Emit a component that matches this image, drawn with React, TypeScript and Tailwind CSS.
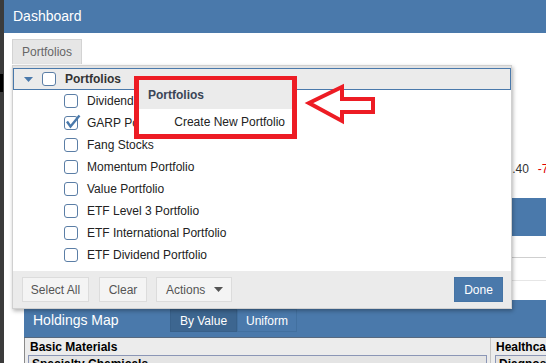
import React from "react";

function Box({ checked = false }: { checked?: boolean }) {
  return (
    <span className="relative inline-block w-[14px] h-[14px] rounded-[3px] border border-[#5b7ea6] bg-white shrink-0">
      {checked && (
        <svg className="absolute left-[-1px] top-[-1px] overflow-visible" width="14" height="14" viewBox="0 0 14 14">
          <path d="M3 5.5 L6.5 10.5 L15.5 -0.5" fill="none" stroke="#4a79ab" strokeWidth="2.4" />
        </svg>
      )}
    </span>
  );
}

const items: [string, boolean][] = [
  ["Dividend Portfolio", false],
  ["GARP Portfolio", true],
  ["Fang Stocks", false],
  ["Momentum Portfolio", false],
  ["Value Portfolio", false],
  ["ETF Level 3 Portfolio", false],
  ["ETF International Portfolio", false],
  ["ETF Dividend Portfolio", false],
];

export default function App() {
  return (
    <div className="relative w-[546px] h-[363px] overflow-hidden flex bg-[#3b3b3b] font-['Liberation_Sans',Arial,sans-serif]">
      {/* left edge strip */}
      <div className="w-[4px] shrink-0 flex flex-col">
        <div className="h-[74px]" />
        <div className="h-[18px] w-[3px] bg-black" />
      </div>

      {/* main window */}
      <div className="relative flex-1 bg-white flex flex-col">
        <div className="h-[33px] shrink-0 bg-[#4a79ab] flex items-center pl-[9px] text-white text-[14px]">
          Dashboard
        </div>
        <div className="pl-[8px] pt-[6px]">
          <div className="h-[25px] w-[70px] bg-[#e6e6e6] border border-b-0 border-[#d3d3d3] text-[12px] text-[#666] flex items-center justify-center">
            Portfolios
          </div>
        </div>

        {/* background content */}
        <div className="h-[97px] shrink-0" />
        <div className="h-[16px] shrink-0 flex items-center gap-[9px] pl-[489px] text-[12px] whitespace-nowrap">
          <span className="text-[#333]">112.40</span>
          <span className="text-[#e00000]">-7.52%</span>
        </div>
        <div className="h-[21px] shrink-0" />
        <div className="h-[38px] shrink-0 ml-[20px] bg-[#4a79ab]" />
        <div className="h-[21px] shrink-0" />
        <div className="h-[1px] shrink-0 ml-[20px] bg-[#cfcfcf]" />
        <div className="h-[22px] shrink-0" />
        <div className="h-[1px] shrink-0 ml-[20px] bg-[#e6e6e6]" />
        <div className="h-[19px] shrink-0" />

        {/* Holdings map */}
        <div className="ml-[20px] flex flex-col shrink-0">
          <div className="h-[37px] bg-[#4a79ab] flex items-center pt-[4px]">
            <span className="pl-[9px] w-[146px] text-white text-[14px]">Holdings Map</span>
            <div className="h-[23px] w-[67px] bg-[#3d6690] border border-[#386089] text-white text-[12px] flex items-center justify-center">
              By Value
            </div>
            <div className="h-[23px] w-[60px] bg-[#4a79ab] border border-[#42709f] text-white text-[12px] flex items-center justify-center">
              Uniform
            </div>
          </div>
          <div className="h-[1px] bg-[#56697f]" />
          <div className="flex bg-[#ececec] border-l border-[#8a8a8a] h-[30px] text-[12px] font-bold text-black">
            <div className="w-[466px] shrink-0 border-r border-[#c4c4c4] pl-[3px] pr-[3px] pt-[1px] flex flex-col">
              <div className="h-[16px] leading-[16px] pl-[2px]">Basic Materials</div>
              <div className="h-[20px] border border-[#8b96b6] bg-[#e4e4e4] pl-[3px] leading-[16px]">Specialty Chemicals</div>
            </div>
            <div className="flex-1 pl-[4px] pt-[1px] flex flex-col whitespace-nowrap">
              <div className="h-[16px] leading-[16px] pl-[1px]">Healthcare</div>
              <div className="h-[20px] border border-[#8b96b6] bg-[#e4e4e4] pl-[3px] leading-[16px]">Diagnostics</div>
            </div>
          </div>
        </div>

        {/* dropdown panel */}
        <div className="absolute left-[8px] top-[65px] w-[500px] h-[244px] bg-white border border-[#d0d0d0] shadow-[1px_2px_4px_rgba(0,0,0,0.3)] flex flex-col text-[12px]">
          <div className="h-[2px] bg-[#e2e2e2]" />
          <div className="h-[22px] border border-[#4a79ab] bg-[#ebebeb] flex items-center pl-[10px]">
            <svg width="9" height="5" viewBox="0 0 9 5" className="shrink-0">
              <polygon points="0,0 9,0 4.5,5" fill="#4a79ab" />
            </svg>
            <span className="ml-[9px] flex"><Box /></span>
            <span className="ml-[9px] font-bold text-[#333]">Portfolios</span>
          </div>
          <div className="flex flex-col">
            {items.map(([label, checked]) => (
              <div key={label} className="h-[22px] flex items-center pl-[51px]">
                <Box checked={checked} />
                <span className="ml-[9px] text-[#222]">{label}</span>
              </div>
            ))}
          </div>
          <div className="h-[5px]" />
          <div className="h-[37px] bg-[#ebebeb] flex items-center pl-[9px] pr-[8px] text-[#555]">
            <div className="h-[25px] w-[67px] bg-[#f4f4f4] border border-[#dcdcdc] flex items-center justify-center">Select All</div>
            <div className="ml-[10px] h-[25px] w-[48px] bg-[#f4f4f4] border border-[#dcdcdc] flex items-center justify-center">Clear</div>
            <div className="ml-[9px] h-[25px] w-[76px] bg-[#f4f4f4] border border-[#dcdcdc] flex items-center pl-[9px]">
              <span>Actions</span>
              <svg width="9" height="5" viewBox="0 0 9 5" className="ml-[9px]">
                <polygon points="0,0 9,0 4.5,5" fill="#555" />
              </svg>
            </div>
            <div className="ml-auto h-[25px] w-[49px] bg-[#4a79ab] border border-[#4574a5] text-white flex items-center justify-center">Done</div>
          </div>
        </div>
      </div>

      {/* context menu highlighted with red box */}
      <div className="absolute left-[134px] top-[76px] w-[163px] h-[63px] border-[5px] border-t-[4px] border-[#ed1c24] flex flex-col text-[12px]">
        <div className="h-[29px] bg-[#ebebeb] flex items-center pl-[9px] font-bold text-[#3a4556]">Portfolios</div>
        <div className="h-[25px] bg-white flex items-center justify-end pr-[7px] text-[#222]">Create New Portfolio</div>
      </div>

      {/* annotation arrow */}
      <svg className="absolute left-0 top-0 pointer-events-none" width="546" height="363" viewBox="0 0 546 363">
        <polygon
          points="309,103 342,87 342,99 373,99 373,112 342,112 342,121"
          fill="white"
          stroke="#ed1c24"
          strokeWidth="4"
          strokeLinejoin="miter"
        />
      </svg>
    </div>
  );
}
